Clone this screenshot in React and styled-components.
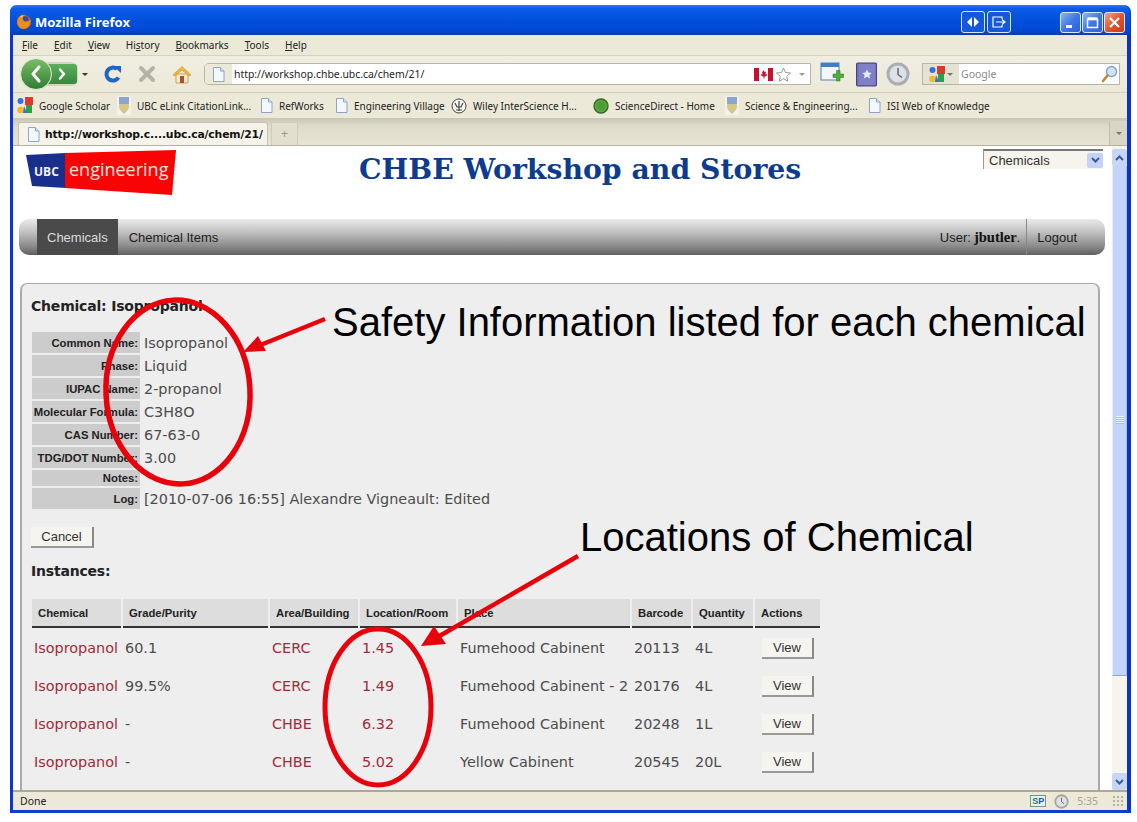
import React from 'react';
import styled, { createGlobalStyle } from 'styled-components';

const GlobalStyle = createGlobalStyle`
  html, body {
    margin: 0;
    padding: 0;
    background: #fff;
    font-family: "Liberation Sans", Arial, sans-serif;
  }
`;

const Stage = styled.div`
  position: relative;
  width: 1137px;
  height: 822px;
  overflow: hidden;
  background: #fff;
`;

const Win = styled.div`
  margin: 5px 0 0 10px;
  width: 1121px;
  height: 808px;
  display: flex;
  flex-direction: column;
  box-sizing: border-box;
  border-left: 3px solid #0a35d6;
  border-right: 4px solid #0a35c8;
  border-bottom: 3px solid #0a3fd0;
  border-radius: 7px 7px 0 0;
  background: #ece9d8;
`;

/* title bar */
const TitleBar = styled.div`
  height: 30px;
  margin: 0 -3px;
  padding: 4px 5px 0 6px;
  box-sizing: border-box;
  display: flex;
  align-items: center;
  background: linear-gradient(#2a7bf2 0, #0a5be6 12%, #0350dd 50%, #0148d4 85%, #0a3cb4 100%);
  border-radius: 7px 7px 0 0;
`;

const TitleText = styled.span`
  margin-left: 3px;
  font: bold 13px "Open Sans", sans-serif;
  color: #fff;
`;

const TitleSpacer = styled.div`
  flex: ${(p) => (p.$w ? 'none' : 1)};
  width: ${(p) => p.$w || 0}px;
`;

const ExtraBtn = styled.div`
  width: 22px;
  height: 20px;
  margin-right: 2px;
  display: flex;
  align-items: center;
  justify-content: center;
  border: 1px solid #d8e6fb;
  border-radius: 3px;
  background: #1458dc;
`;

const WinBtn = styled.div`
  width: 21px;
  height: 21px;
  margin-left: 1px;
  display: flex;
  align-items: center;
  justify-content: center;
  border: 1px solid #dfe8fb;
  border-radius: 3px;
  box-sizing: border-box;
  background: ${(p) =>
    p.$close
      ? 'linear-gradient(135deg, #f0a58a, #e2552c 50%, #c8391a)'
      : 'linear-gradient(135deg, #8fb4f2, #3e7ae6 50%, #2a5fd0)'};
`;

/* menu */
const MenuBar = styled.div`
  height: 20px;
  padding-left: 9px;
  display: flex;
  align-items: center;
  gap: 16px;
  font: 10px "Noto Sans", sans-serif;
  color: #222;
  background: #ece9d8;
  border-bottom: 1px solid #d6d2c0;
`;

/* navigation */
const NavToolbar = styled.div`
  height: 36px;
  padding-left: 7px;
  display: flex;
  align-items: center;
  background: linear-gradient(#f0eee2, #ece9d8);
  border-bottom: 1px solid #d6d2c0;
`;

const Slot = styled.div`
  width: ${(p) => p.$w}px;
  margin-left: ${(p) => p.$ml || 0}px;
  flex: none;
  display: flex;
  align-items: center;
  justify-content: center;
`;

const UrlBar = styled.div`
  width: 607px;
  height: 22px;
  margin-left: 9px;
  flex: none;
  display: flex;
  align-items: center;
  box-sizing: border-box;
  border: 1px solid #b8b5a6;
  border-radius: 5px 0 0 5px;
  background: #fff;
  overflow: hidden;
`;

const UrlIcon = styled.div`
  width: 27px;
  height: 100%;
  display: flex;
  align-items: center;
  justify-content: center;
  background: #ece9d8;
`;

const UrlText = styled.span`
  flex: 1;
  margin-left: 2px;
  font: 10.4px "Noto Sans", sans-serif;
  color: #222;
`;

const SearchBox = styled.div`
  width: 198px;
  height: 22px;
  margin-left: 11px;
  flex: none;
  display: flex;
  align-items: center;
  box-sizing: border-box;
  border: 1px solid #b8b5a6;
  background: #fff;
`;

const SearchEngine = styled.div`
  width: 36px;
  height: 100%;
  display: flex;
  align-items: center;
  justify-content: center;
  gap: 2px;
  background: #e6e3d4;
`;

const SearchHint = styled.span`
  flex: 1;
  margin-left: 2px;
  font: 10.5px "Noto Sans", sans-serif;
  color: #8a8a8a;
`;

const Caret = styled.span`
  width: 0;
  height: 0;
  border-left: 3px solid transparent;
  border-right: 3px solid transparent;
  border-top: 3px solid ${(p) => p.$color || '#555'};
`;

/* bookmarks */
const BookmarkBar = styled.div`
  height: 25px;
  padding-left: 4px;
  display: flex;
  align-items: center;
  background: #ece9d8;
  font: 10px "Noto Sans", sans-serif;
  color: #222;
`;

const Bookmark = styled.div`
  width: ${(p) => p.$w}px;
  flex: none;
  display: flex;
  align-items: center;
  gap: 6px;
  white-space: nowrap;
  overflow: hidden;

  svg {
    flex: none;
  }
`;

/* tabs */
const TabStrip = styled.div`
  height: 28px;
  padding-left: 5px;
  display: flex;
  align-items: flex-end;
  gap: 3px;
  box-sizing: border-box;
  background: linear-gradient(#c9c6b6, #dedbcb 30%, #e8e5d6);
  border-bottom: 1px solid #b5b2a2;
`;

const Tab = styled.div`
  width: 250px;
  height: 23px;
  padding-left: 8px;
  display: flex;
  align-items: center;
  gap: 5px;
  box-sizing: border-box;
  border: 1px solid #c6c3b3;
  border-bottom: none;
  border-radius: 3px 3px 0 0;
  background: #f6f4ea;
  font: bold 10.8px "DejaVu Sans", sans-serif;
  letter-spacing: -0.15px;
  color: #111;
  white-space: nowrap;

  svg {
    flex: none;
  }
`;

const NewTab = styled.div`
  width: 27px;
  height: 23px;
  display: flex;
  align-items: center;
  justify-content: center;
  box-sizing: border-box;
  border: 1px solid #d0cdbd;
  border-bottom: none;
  background: #e2dfcf;
  font-size: 12px;
  color: #9a9a8a;
`;

const TabMenu = styled.div`
  width: 17px;
  height: 24px;
  margin-left: auto;
  display: flex;
  align-items: center;
  justify-content: center;
  background: #d9d6c6;
  border-left: 1px solid #c0bdad;
`;

/* page */
const Viewport = styled.div`
  flex: 1;
  min-height: 0;
  display: flex;
`;

const Page = styled.div`
  flex: 1;
  min-width: 0;
  display: flex;
  flex-direction: column;
  background: #fff;
  overflow: hidden;
`;

const PageHeader = styled.div`
  height: 73px;
  flex: none;
  padding-left: 13px;
  display: flex;
  align-items: flex-start;
`;

const LogoWrap = styled.div`
  width: 152px;
  margin-top: 4px;
  flex: none;
  line-height: 0;
`;

const SiteTitle = styled.h1`
  width: 440px;
  margin: 5px 0 0 181px;
  font: bold 28.3px/36px "DejaVu Serif", Georgia, serif;
  color: #0d3c8e;
  white-space: nowrap;
`;

const Select = styled.div`
  width: 120px;
  height: 20px;
  margin: 3px 9px 0 auto;
  padding-left: 5px;
  flex: none;
  display: flex;
  align-items: center;
  justify-content: space-between;
  box-sizing: border-box;
  border-top: 2px solid #777;
  border-left: 1px solid #999;
  background: #f6f4ec;
  font: 13px "Liberation Sans", sans-serif;
  color: #333;
`;

const SelectArrow = styled.div`
  width: 16px;
  height: 15px;
  display: flex;
  align-items: center;
  justify-content: center;
  border-radius: 2px;
  background: #c3d3f5;
`;

const MainNav = styled.nav`
  width: 1086px;
  height: 36px;
  margin-left: 6px;
  padding: 0 17px 0 18px;
  flex: none;
  display: flex;
  align-items: stretch;
  box-sizing: border-box;
  border-radius: 10px;
  background: linear-gradient(#eaeaea 0, #c9c9c9 30%, #8c8c8c 75%, #5f5f5f 100%);
  font: 13px "Liberation Sans", sans-serif;
`;

const NavItem = styled.div`
  padding: 0 ${(p) => (p.$pr !== undefined ? p.$pr : p.$active ? 10 : 11)}px 0 ${(p) => (p.$active ? 10 : p.$sep ? 10 : 11)}px;
  display: flex;
  align-items: center;
  color: ${(p) => (p.$active ? '#ddd' : '#1c1c1c')};
  background: ${(p) => (p.$active ? '#4a4a4a' : 'transparent')};
  border-left: ${(p) => (p.$sep ? '1px solid #888' : 'none')};
  white-space: nowrap;
`;

const NavRight = styled.div`
  margin-left: auto;
  display: flex;
  align-items: stretch;
`;

const Strong = styled.strong`
  margin-left: 3px;
  font-family: "Liberation Serif", serif;
  font-size: 14.5px;
  color: #111;
`;

const Panel = styled.section`
  width: 1080px;
  margin: 28px 0 0 7px;
  padding: 13px 10px 0;
  flex: 1;
  min-height: 0;
  box-sizing: border-box;
  overflow: hidden;
  border: 1px solid #aaa;
  border-right-width: 2px;
  border-left-width: 2px;
  border-bottom: none;
  border-radius: 7px 7px 0 0;
  background: #eee;
`;

const PanelHeading = styled.h2`
  margin: 0 0 0 -1px;
  font: bold 14px/18px "DejaVu Sans", sans-serif;
  letter-spacing: -0.2px;
  color: #222;
`;

const Details = styled.div`
  margin-top: 17px;
  display: grid;
  grid-template-columns: 108px 1fr;
  row-gap: 2px;
`;

const DetailLabel = styled.div`
  height: ${(p) => (p.$short ? 16 : 21)}px;
  padding-right: 2px;
  display: flex;
  align-items: center;
  justify-content: flex-end;
  background: #ccc;
  font: bold 11.3px "Liberation Sans", sans-serif;
  color: #222;
  white-space: nowrap;
`;

const DetailValue = styled.div`
  padding-left: 4px;
  display: flex;
  align-items: center;
  font: 14.4px "DejaVu Sans", sans-serif;
  color: #4c4c4c;
  white-space: nowrap;
`;

const Btn = styled.div`
  width: ${(p) => p.$w}px;
  height: 21px;
  margin-left: ${(p) => p.$ml || 0}px;
  display: flex;
  align-items: center;
  justify-content: center;
  box-sizing: border-box;
  background: #f6f4ef;
  border-right: 2px solid #888;
  border-bottom: 2px solid #999;
  font: 13px "Liberation Sans", sans-serif;
  color: #333;
`;

const CancelRow = styled.div`
  margin: 18px 0 0 -1px;
`;

const SubHeading = styled.h3`
  margin: 14px 0 0 -1px;
  font: bold 14px/18px "DejaVu Sans", sans-serif;
  letter-spacing: -0.2px;
  color: #222;
`;

const Table = styled.table`
  margin: 17px 0 0 -2px;
  border-collapse: separate;
  border-spacing: 2px;
  table-layout: fixed;
  width: 792px;
`;

const Th = styled.th`
  width: ${(p) => p.$w}px;
  height: 29px;
  padding: 0 0 0 6px;
  box-sizing: border-box;
  text-align: left;
  background: #ddd;
  border-bottom: 2px solid #333;
  font: bold 11.3px "Liberation Sans", sans-serif;
  color: #222;
  white-space: nowrap;
  overflow: hidden;
`;

const Td = styled.td`
  height: 36px;
  padding: 0 0 0 2px;
  font: 14.4px "DejaVu Sans", sans-serif;
  color: #4c4c4c;
  white-space: nowrap;
`;

const RowLink = styled.a`
  color: #a32a3a;
  text-decoration: none;
`;

/* scrollbar */
const Scrollbar = styled.div`
  width: 15px;
  flex: none;
  display: flex;
  flex-direction: column;
  background: #f5f5ee;
`;

const ScrollBtn = styled.div`
  height: 17px;
  margin-top: ${(p) => (p.$bottom ? 'auto' : '3px')};
  display: flex;
  align-items: center;
  justify-content: center;
  background: #c7d6f8;
  border-radius: 2px;
`;

const ScrollThumb = styled.div`
  height: 510px;
  display: flex;
  align-items: flex-start;
  justify-content: center;
  box-sizing: border-box;
  padding-top: 250px;
  background: #c3d4fa;
  border-left: 1px solid #e4ecfc;
  border-right: 1px solid #a8bdeb;
  border-bottom: 1px solid #8fa6d8;
`;

const Grip = styled.div`
  width: 8px;
  height: 8px;
  background: repeating-linear-gradient(#eef3ff 0 1px, #a9bde8 1px 2px);
`;

/* status bar */
const StatusBar = styled.div`
  height: 20px;
  padding-left: 7px;
  flex: none;
  display: flex;
  align-items: center;
  box-sizing: border-box;
  border-top: 2px solid #aca899;
  background: #ece9d8;
  font: 10.5px "Noto Sans", sans-serif;
  color: #222;
`;

const StatusRight = styled.div`
  margin-left: auto;
  padding-right: 2px;
  display: flex;
  align-items: center;
  gap: 8px;
`;

const SpBadge = styled.span`
  padding: 0 1px;
  border: 1px solid #6c9a8a;
  background: #e6f2ee;
  font: bold 9px/10px "Liberation Sans", sans-serif;
  color: #2e7d52;
`;

const SpBlue = styled.span`
  color: #2a4fc8;
`;

const StatusTime = styled.span`
  color: #a5a397;
  font-size: 10.5px;
`;

const ResizeGrip = styled.div`
  width: 13px;
  height: 13px;
  margin-left: 6px;
  background: radial-gradient(circle, #b5b2a2 1px, transparent 1.2px) 0 0 / 4px 4px;
`;

/* annotations over the screenshot */
const Overlay = styled.svg`
  position: absolute;
  left: 0;
  top: 0;
  pointer-events: none;
`;

const Callout = styled.div`
  position: absolute;
  left: ${(p) => p.$x}px;
  top: ${(p) => p.$y}px;
  font: 40px/46px "Liberation Sans", Arial, sans-serif;
  color: #000;
  white-space: nowrap;
`;

/* drawings */
const PageIcon = ({ size = 15 }) => (
  <svg width={size - 2} height={size} viewBox="0 0 13 15">
    <path d="M1.5.5h7l3.5 3.500v10.500h-10.500z" fill="#f4f8fe" stroke="#8aa6c8" />
    <path d="M8.500.5v3.500h3.500" fill="#d4e2f4" stroke="#8aa6c8" />
  </svg>
);

const FirefoxIcon = () => (
  <svg width="16" height="16" viewBox="0 0 17 17">
    <circle cx="8.500" cy="8.500" r="7.500" fill="#d8661a" />
    <circle cx="9.500" cy="6.500" r="4.200" fill="#2a4fa8" />
    <path d="M2 5c1.500-3.500 5-5 8.500-4-2.500.5-4 2.500-3 5 1.200 2.800 5 2.500 7.800.5C15.500 11.500 12.500 16 8 16 3 16 0 10 2 5z" fill="#ef8c1e" />
    <path d="M4.500 3C5.500 2 6.800 1.500 8 1.300L6 4.200z" fill="#ffd23e" />
  </svg>
);

const BackForward = () => (
  <svg width="58" height="34" viewBox="0 0 58 34">
    <defs>
      <linearGradient id="bfG" x1="0" y1="0" x2="0" y2="1">
        <stop offset="0" stopColor="#7dbd6a" />
        <stop offset="1" stopColor="#2f7d32" />
      </linearGradient>
      <linearGradient id="bfG2" x1="0" y1="0" x2="0" y2="1">
        <stop offset="0" stopColor="#5dae5c" />
        <stop offset="1" stopColor="#358a3b" />
      </linearGradient>
    </defs>
    <rect x="20" y="5" width="38" height="24" rx="7" fill="#d5d3c6" />
    <rect x="26" y="7" width="31" height="20" rx="3" fill="url(#bfG2)" />
    <circle cx="16" cy="17" r="15.500" fill="url(#bfG)" stroke="#e6f0dc" />
    <path d="M19 10l-6 7 6 7" fill="none" stroke="#fff" strokeWidth="3" strokeLinecap="round" strokeLinejoin="round" />
    <path d="M40 12.500l4 4.500-4 4.500" fill="none" stroke="#fff" strokeWidth="2.500" strokeLinecap="round" strokeLinejoin="round" />
  </svg>
);

const ReloadIcon = () => (
  <svg width="20" height="20" viewBox="0 0 20 20">
    <path d="M15.500 13.500A6.500 6.500 0 1 1 14 5" fill="none" stroke="#1f66c8" strokeWidth="4" />
    <path d="M10 2h8v7z" fill="#1f66c8" />
  </svg>
);

const StopIcon = () => (
  <svg width="18" height="18" viewBox="0 0 18 18">
    <path d="M3 3l12 12M15 3L3 15" stroke="#b4b3aa" strokeWidth="4" strokeLinecap="round" />
  </svg>
);

const HomeIcon = () => (
  <svg width="20" height="19" viewBox="0 0 20 19">
    <path d="M4 9v9h12V9z" fill="#f7eccb" stroke="#c8a25a" />
    <path d="M1 10L10 1.500 19 10l-2 1-7-6-7 6z" fill="#f2b63c" stroke="#c98a20" strokeWidth=".6" />
    <rect x="8" y="11" width="4" height="7" fill="#a8502e" />
  </svg>
);

const GoogleIcon = () => (
  <svg width="16" height="17" viewBox="0 0 16 17">
    <rect x="8" y="0" width="8" height="8" fill="#d93a2b" />
    <rect x="9" y="8" width="6" height="8" fill="#2f9e44" />
    <circle cx="3.500" cy="4" r="3" fill="#3a6fd8" />
    <circle cx="3.500" cy="13" r="3.300" fill="#f2b92c" />
    <path d="M7 9l3 7H6z" fill="#3a6fd8" />
  </svg>
);

const UbcShield = () => (
  <svg width="14" height="19" viewBox="0 0 14 19">
    <rect width="14" height="19" fill="#f4f2ea" />
    <path d="M2 1h10v9c0 4-3 6-5 8-2-2-5-4-5-8z" fill="#d7c68a" />
    <rect x="2" y="1" width="10" height="7" fill="#8ea6cf" />
  </svg>
);

const WileyIcon = () => (
  <svg width="16" height="16" viewBox="0 0 16 16">
    <circle cx="8" cy="8" r="7" fill="#f7f6f0" stroke="#444" />
    <path d="M4 5l2 4h4l2-4M8 3v10M5 12h6" fill="none" stroke="#444" strokeWidth="1.200" />
  </svg>
);

const GreenDot = () => (
  <svg width="16" height="16" viewBox="0 0 16 16">
    <circle cx="8" cy="8" r="7" fill="#5ea43a" stroke="#2d6e24" strokeWidth="1.400" />
    <circle cx="8" cy="8" r="4" fill="#4c9a3c" />
  </svg>
);

const CanadaFlag = () => (
  <svg width="19" height="13" viewBox="0 0 19 13">
    <rect width="19" height="13" fill="#fff" />
    <rect width="5" height="13" fill="#c8102e" />
    <rect x="14" width="5" height="13" fill="#c8102e" />
    <path d="M9.500 2l1 2 1.500-.5-.5 3 1.500-.5-.5 2-2 .5v2h-1v-2l-2-.5-.5-2 1.500.5-.5-3L8.500 4z" fill="#c8102e" />
  </svg>
);

const StarOutline = () => (
  <svg width="15" height="15" viewBox="0 0 15 15">
    <path d="M7.500 1l2 4.500 5 .5-3.700 3.300 1 5-4.300-2.600-4.300 2.600 1-5L.5 6l5-.5z" fill="#fff" stroke="#9a9a90" />
  </svg>
);

const AddTabIcon = () => (
  <svg width="24" height="24" viewBox="0 0 24 24">
    <rect x="1" y="1" width="18" height="17" fill="#f2f7fd" stroke="#4a83c4" />
    <rect x="1" y="1" width="18" height="4" fill="#3f7fc8" />
    <path d="M13 12h3.500V8.500h3.500V12h3.500v3.500H20V19h-3.500v-3.500H13z" fill="#4cae3c" stroke="#2f7d28" strokeWidth=".6" />
  </svg>
);

const BookIcon = () => (
  <svg width="21" height="25" viewBox="0 0 21 25">
    <rect x=".5" y="1" width="20" height="23" rx="1" fill="#6c6cb8" stroke="#44447e" />
    <rect x="2.500" y="2" width="17" height="21" fill="#7f80c8" />
    <path d="M11 7.500l1.500 3 3.300.4-2.400 2.200.7 3.300-3.100-1.700-3.100 1.700.7-3.300-2.400-2.200 3.300-.4z" fill="#e8e8f6" />
  </svg>
);

const ClockIcon = ({ size = 24, c = '#a9adb4' }) => (
  <svg width={size} height={size} viewBox="0 0 24 24">
    <circle cx="12" cy="12" r="10" fill="#dde1e6" stroke={c} strokeWidth="3" />
    <path d="M12 6v6.500l4 3" fill="none" stroke="#5a6068" strokeWidth="1.400" />
  </svg>
);

const Magnifier = () => (
  <svg width="17" height="18" viewBox="0 0 17 18">
    <circle cx="10.500" cy="6.500" r="5" fill="#cfe4fa" stroke="#7ea5cf" strokeWidth="1.400" />
    <path d="M6.500 10.500L2 16" stroke="#c8862a" strokeWidth="2.600" strokeLinecap="round" />
  </svg>
);

const Chevron = ({ up, color = '#3a5a9a' }) => (
  <svg width="9" height="6" viewBox="0 0 9 6">
    <path d={up ? 'M1 5l3.500-3.500L8 5' : 'M1 1l3.500 3.500L8 1'} fill="none" stroke={color} strokeWidth="2" />
  </svg>
);

const UbcLogo = () => (
  <svg width="152" height="46" viewBox="0 0 152 46">
    <polygon points="0,5 40,3 40,38 6,36" fill="#1a2f8c" />
    <polygon points="39,3 150,0 146,45 39,38" fill="#f80404" />
    <text x="8" y="26" fontFamily="Open Sans, sans-serif" fontWeight="700" fontSize="12" fill="#f4f4fa">UBC</text>
    <text x="43" y="26" fontFamily="Open Sans, sans-serif" fontSize="18" fill="#fbe6e0">engineering</text>
  </svg>
);

const details = [
  ['Common Name:', 'Isopropanol'],
  ['Phase:', 'Liquid'],
  ['IUPAC Name:', '2-propanol'],
  ['Molecular Formula:', 'C3H8O'],
  ['CAS Number:', '67-63-0'],
  ['TDG/DOT Number:', '3.00'],
  ['Notes:', ''],
  ['Log:', '[2010-07-06 16:55] Alexandre Vigneault: Edited'],
];

const columns = [
  ['Chemical', 89],
  ['Grade/Purity', 145],
  ['Area/Building', 88],
  ['Location/Room', 96],
  ['Place', 172],
  ['Barcode', 59],
  ['Quantity', 60],
  ['Actions', 65],
];

const instances = [
  ['60.1', 'CERC', '1.45', 'Fumehood Cabinent', '20113', '4L'],
  ['99.5%', 'CERC', '1.49', 'Fumehood Cabinent - 2', '20176', '4L'],
  ['-', 'CHBE', '6.32', 'Fumehood Cabinent', '20248', '1L'],
  ['-', 'CHBE', '5.02', 'Yellow Cabinent', '20545', '20L'],
];

const bookmarks = [
  [<GoogleIcon key="g" />, 'Google Scholar', 100],
  [<UbcShield key="u" />, 'UBC eLink CitationLink...', 143],
  [<PageIcon key="p" />, 'RefWorks', 75],
  [<PageIcon key="p" />, 'Engineering Village', 116],
  [<WileyIcon key="w" />, 'Wiley InterScience H...', 142],
  [<GreenDot key="s" />, 'ScienceDirect - Home', 132],
  [<UbcShield key="u" />, 'Science & Engineering...', 143],
  [<PageIcon key="p" />, 'ISI Web of Knowledge', 130],
];

export default function App() {
  return (
    <Stage>
      <GlobalStyle />
      <Win>
        <TitleBar>
          <FirefoxIcon />
          <TitleText>Mozilla Firefox</TitleText>
          <TitleSpacer />
          <ExtraBtn>
            <svg width="14" height="10" viewBox="0 0 14 10">
              <path d="M6 0v10L1 5zM8 0v10l5-5z" fill="#fff" />
            </svg>
          </ExtraBtn>
          <ExtraBtn>
            <svg width="14" height="12" viewBox="0 0 14 12">
              <path d="M10 3V1H1v10h9V9M4 6h9M10 3.500L13 6l-3 2.500" fill="none" stroke="#fff" strokeWidth="1.200" />
            </svg>
          </ExtraBtn>
          <TitleSpacer $w={46} />
          <WinBtn>
            <svg width="13" height="13" viewBox="0 0 13 13"><rect x="2" y="9" width="6" height="3" fill="#fff" /></svg>
          </WinBtn>
          <WinBtn>
            <svg width="13" height="13" viewBox="0 0 13 13"><path d="M1.500 3.500h10v8h-10zM1.500 2h10" fill="none" stroke="#fff" strokeWidth="1.500" /></svg>
          </WinBtn>
          <WinBtn $close>
            <svg width="13" height="13" viewBox="0 0 13 13"><path d="M2 2l9 9M11 2l-9 9" stroke="#fff" strokeWidth="2.200" /></svg>
          </WinBtn>
        </TitleBar>

        <MenuBar>
          <span><u>F</u>ile</span>
          <span><u>E</u>dit</span>
          <span><u>V</u>iew</span>
          <span>Hi<u>s</u>tory</span>
          <span><u>B</u>ookmarks</span>
          <span><u>T</u>ools</span>
          <span><u>H</u>elp</span>
        </MenuBar>

        <NavToolbar>
          <BackForward />
          <Slot $w={14}><Caret $color="#333" /></Slot>
          <Slot $w={26} $ml={8}><ReloadIcon /></Slot>
          <Slot $w={26} $ml={8}><StopIcon /></Slot>
          <Slot $w={26} $ml={9}><HomeIcon /></Slot>
          <UrlBar>
            <UrlIcon><PageIcon /></UrlIcon>
            <UrlText>http://workshop.chbe.ubc.ca/chem/21/</UrlText>
            <CanadaFlag />
            <Slot $w={21}><StarOutline /></Slot>
            <Slot $w={16}><Caret $color="#999" /></Slot>
          </UrlBar>
          <Slot $w={28} $ml={7}><AddTabIcon /></Slot>
          <Slot $w={24} $ml={8}><BookIcon /></Slot>
          <Slot $w={26} $ml={7}><ClockIcon /></Slot>
          <SearchBox>
            <SearchEngine><GoogleIcon /><Caret $color="#777" /></SearchEngine>
            <SearchHint>Google</SearchHint>
            <Slot $w={20}><Magnifier /></Slot>
          </SearchBox>
        </NavToolbar>

        <BookmarkBar>
          {bookmarks.map(([icon, label, w]) => (
            <Bookmark key={label} $w={w}>
              {icon}
              <span>{label}</span>
            </Bookmark>
          ))}
        </BookmarkBar>

        <TabStrip>
          <Tab>
            <PageIcon />
            http://workshop.c....ubc.ca/chem/21/
          </Tab>
          <NewTab>+</NewTab>
          <TabMenu><Caret $color="#777" /></TabMenu>
        </TabStrip>

        <Viewport>
          <Page>
            <PageHeader>
              <LogoWrap><UbcLogo /></LogoWrap>
              <SiteTitle>CHBE Workshop and Stores</SiteTitle>
              <Select>
                Chemicals
                <SelectArrow><Chevron /></SelectArrow>
              </Select>
            </PageHeader>

            <MainNav>
              <NavItem $active>Chemicals</NavItem>
              <NavItem>Chemical Items</NavItem>
              <NavRight>
                <NavItem $pr={6}>User:<Strong>jbutler</Strong>.</NavItem>
                <NavItem $sep>Logout</NavItem>
              </NavRight>
            </MainNav>

            <Panel>
              <PanelHeading>Chemical: Isopropanol</PanelHeading>
              <Details>
                {details.map(([label, value]) => (
                  <React.Fragment key={label}>
                    <DetailLabel $short={label === 'Notes:'}>{label}</DetailLabel>
                    <DetailValue>{value}</DetailValue>
                  </React.Fragment>
                ))}
              </Details>
              <CancelRow><Btn $w={63}>Cancel</Btn></CancelRow>
              <SubHeading>Instances:</SubHeading>
              <Table>
                <thead>
                  <tr>{columns.map(([h, w]) => <Th key={h} $w={w}>{h}</Th>)}</tr>
                </thead>
                <tbody>
                  {instances.map((row) => (
                    <tr key={row[4]}>
                      <Td><RowLink>Isopropanol</RowLink></Td>
                      <Td>{row[0]}</Td>
                      <Td><RowLink>{row[1]}</RowLink></Td>
                      <Td><RowLink>{row[2]}</RowLink></Td>
                      <Td>{row[3]}</Td>
                      <Td>{row[4]}</Td>
                      <Td>{row[5]}</Td>
                      <Td><Btn $w={52} $ml={5}>View</Btn></Td>
                    </tr>
                  ))}
                </tbody>
              </Table>
            </Panel>
          </Page>

          <Scrollbar>
            <ScrollBtn><Chevron up /></ScrollBtn>
            <ScrollThumb><Grip /></ScrollThumb>
            <ScrollBtn $bottom><Chevron /></ScrollBtn>
          </Scrollbar>
        </Viewport>

        <StatusBar>
          Done
          <StatusRight>
            <SpBadge>S<SpBlue>P</SpBlue></SpBadge>
            <ClockIcon size={15} c="#a8a698" />
            <StatusTime>5:35</StatusTime>
            <ResizeGrip />
          </StatusRight>
        </StatusBar>
      </Win>

      <Overlay width="1137" height="822" viewBox="0 0 1137 822">
        <ellipse cx="178" cy="392" rx="72" ry="92" fill="none" stroke="#e8000a" strokeWidth="5.500" transform="rotate(-3 178 392)" />
        <ellipse cx="378" cy="707" rx="53" ry="78" fill="none" stroke="#e8000a" strokeWidth="5" />
        <path d="M325 319L258 346" stroke="#e8000a" strokeWidth="4.500" />
        <polygon points="243,352 258,336 266,351" fill="#e8000a" />
        <path d="M578 556L436 638" stroke="#e8000a" strokeWidth="4.500" />
        <polygon points="421,646 434,626 446,644" fill="#e8000a" />
      </Overlay>
      <Callout $x={332} $y={299}>Safety Information listed for each chemical</Callout>
      <Callout $x={580} $y={514}>Locations of Chemical</Callout>
    </Stage>
  );
}
